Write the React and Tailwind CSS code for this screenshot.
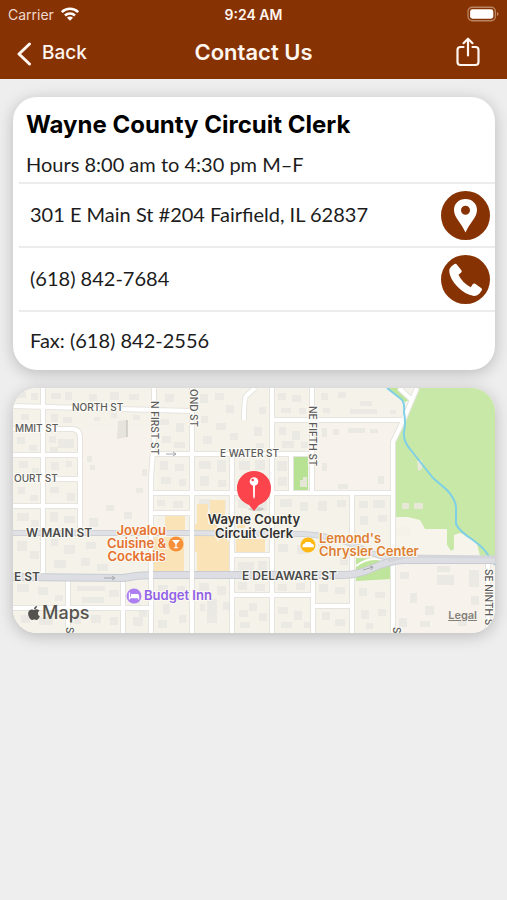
import React from 'react';
import clsx from 'clsx';
import { FaApple } from 'react-icons/fa';

const ROWS = [
  { key: 'address', text: '301 E Main St #204 Fairfield, IL 62837', label: 'Get directions', href: '#directions', Icon: PinGlyph },
  { key: 'phone',   text: '(618) 842-7684', label: 'Call the office', href: 'tel:6188427684', Icon: PhoneGlyph },
  { key: 'fax',     text: 'Fax: (618) 842-2556' },
];

/* ── Icons ───────────────────────────────────────────────────────── */
function WifiGlyph() {
  return (
    <svg viewBox="0 0 20 15" className="w-5 h-4" fill="none" stroke="currentColor" strokeWidth="2.6" aria-hidden="true">
      <path d="M1.8 5.6a11.6 11.6 0 0 1 16.4 0" />
      <path d="M5 9a7.1 7.1 0 0 1 10 0" />
      <path d="M10 14.2 7 11.2a4.2 4.2 0 0 1 6 0z" fill="currentColor" stroke="none" />
    </svg>
  );
}

function BatteryGlyph() {
  return (
    <svg viewBox="0 0 31 15" className="w-8 h-4" aria-hidden="true">
      <rect x="1" y="1" width="26.500" height="13" rx="4" fill="none" stroke="#b98460" strokeWidth="1.300" />
      <rect x="3" y="3" width="22.500" height="9" rx="2.200" fill="#fff" />
      <path d="M29 5.500q1.600.5 1.600 2t-1.600 2z" fill="#b98460" />
    </svg>
  );
}

function ShareGlyph() {
  return (
    <svg viewBox="0 0 24 30" className="w-6 h-[30px]" fill="none" stroke="currentColor" strokeWidth="2.2" strokeLinecap="round" strokeLinejoin="round" aria-hidden="true">
      <path d="M7.500 10H4.500Q1.500 10 1.500 13v12q0 3 3 3h15q3 0 3-3V13q0-3-3-3h-3" />
      <path d="M12 18.500V2M7.500 6.200 12 1.700l4.500 4.500" />
    </svg>
  );
}

function PinGlyph() {
  return (
    <svg viewBox="0 0 49 49" className="w-full h-full" aria-hidden="true">
      <path fill="#fff" fillRule="evenodd" d="M24.500 8C17.800 8 13 12.700 13 19c0 7.800 7.500 13 11.500 22.500C28.500 32 36 26.800 36 19c0-6.300-4.800-11-11.500-11zm0 6.700a4.500 4.500 0 1 1 0 9 4.500 4.500 0 0 1 0-9z" />
    </svg>
  );
}

function PhoneGlyph() {
  return (
    <svg viewBox="0 0 49 49" className="w-full h-full" aria-hidden="true">
      <path fill="#fff" d="M10.500 11.200 13.500 9q1.300-.8 2.300.4l4.600 5.800q.9 1.200-.2 2.200l-2.700 2.400q1.600 3.800 5 7.200 3.500 3.400 7.200 5.200l2.200-3.100q1-1.200 2.300-.3l6.200 4.500q1.200 1 .3 2.300l-2.200 3q-2.300 2.800-6.600 2.200-8.600-1.700-15.600-9.200Q9 24 8.300 16.800q-.3-3.600 2.200-5.600z" />
    </svg>
  );
}

/* ── Map geometry ────────────────────────────────────────────────── */
const STREETS = [
  'M0 18L178 23',
  'M30 0V189',
  'M0 41H59Q67 41 67 50V145',
  'M0 67H67', 'M0 91H67', 'M0 118H67',
  'M141 0V50L138 90V245',
  'M141 66H299', 'M138 105H380', 'M138 125H179',
  'M179 0V245', 'M219 66V245', 'M259 0V245',
  'M299 0V105', 'M300 189V245', 'M278 66V105', 'M339 105V245',
  'M259 32H390',
  'M404 0L390 33L380 54V245', 'M386 0L399 12',
  'M55 189V245', 'M110 189V245', 'M0 220H138',
  'M219 167H259', 'M219 207H300', 'M300 218H339',
  'M475 172V245', 'M242 0L233 8Q231 11 231 32',
];

// x, y, width, height
const BUILDINGS = [
  [5,4,8,6],[18,5,7,7],[38,5,10,6],[52,4,7,8],[76,6,8,7],[97,4,9,8],[116,6,10,6],[152,6,9,8],
  [8,26,8,6],[38,26,7,8],[50,29,9,6],[81,29,6,4],[98,25,6,5],[120,27,7,5],
  [4,49,8,7],[16,57,8,6],[36,48,7,7],[45,51,16,9],[37,59,8,5],[74,68,5,6],[77,77,5,5],
  [6,73,9,7],[19,80,7,6],[38,74,8,8],[53,73,6,6],[5,99,7,7],[17,107,8,6],[37,99,9,6],[54,105,8,8],
  [4,125,12,8],[18,132,8,7],[37,124,8,10],[51,128,11,7],[76,130,9,9],[93,117,8,6],[111,124,8,7],
  [123,100,7,5],[129,81,5,7],[147,31,9,6],[163,35,8,9],[149,48,9,7],[161,54,11,6],
  [147,73,8,9],[162,76,9,7],[148,89,10,7],[166,91,7,7],[144,112,8,6],[160,113,10,7],
  [187,6,8,9],[202,5,9,7],[213,17,8,8],[188,28,7,7],[203,35,10,7],[217,45,8,7],[190,48,9,8],[241,39,8,9],[243,55,8,5],[246,19,7,7],
  [186,73,12,8],[204,72,9,12],[187,88,9,10],[205,92,8,7],[226,73,11,9],[242,72,10,10],[226,91,9,9],[246,91,8,8],
  [265,5,8,7],[279,7,9,7],[268,20,10,5],[286,20,7,6],[266,39,7,8],[279,43,8,9],[269,53,12,7],[288,54,7,6],[264,73,10,10],[265,89,9,9],
  [308,5,7,7],[325,4,8,6],[347,13,12,5],[310,20,7,5],[337,21,27,5],[377,22,6,4],
  [309,40,5,9],[320,41,6,6],[335,40,17,5],[357,41,8,4],[365,88,6,8],[325,96,10,5],[309,75,5,8],
  [186,111,12,10],[204,112,9,10],[225,111,10,9],[245,113,9,10],[267,111,12,8],[287,114,8,9],[305,113,9,10],[324,112,9,7],[346,113,9,7],[360,112,12,8],[347,128,8,9],[365,127,9,7],
  [4,153,10,10],[17,163,9,8],[38,151,7,7],[51,157,11,9],[73,154,10,7],[41,172,12,8],[68,170,9,8],[84,176,11,7],
  [4,196,12,8],[25,199,10,8],[42,207,8,6],[64,198,28,5],[69,209,22,6],[96,202,10,7],[118,209,9,7],[126,219,8,10],
  [8,227,9,8],[26,229,14,8],[61,226,7,10],[78,227,10,8],[97,229,8,8],[120,229,10,9],
  [145,197,10,9],[164,198,8,10],[150,216,7,10],[166,227,7,8],[145,232,9,8],
  [186,195,10,8],[204,198,9,9],[187,216,5,7],[194,211,10,24],[210,214,6,8],
  [225,174,16,8],[245,173,9,9],[225,194,9,8],[242,196,10,7],[226,222,9,7],[236,215,8,8],[246,225,8,8],[227,234,10,6],
  [265,156,10,8],[284,157,10,9],[265,196,9,7],[283,195,9,7],[265,219,10,7],[281,223,8,9],[268,234,11,6],[291,234,6,6],
  [306,196,9,8],[322,199,10,7],[309,224,8,8],[322,231,10,7],[305,156,12,8],[327,169,8,8],
  [346,200,8,8],[362,204,10,6],[348,222,8,9],[365,221,8,7],[353,235,7,6],
  [387,184,9,7],[397,205,7,10],[412,218,9,9],[424,187,17,10],[424,178,13,6],[456,182,10,17],[458,208,8,9],[386,230,8,9],[407,233,10,6],[445,232,9,6],
];

const SHOPS = [
  'M152 128h20v14h-20z', 'M141 149h30v34h-30z',
  'M184 116h11v20h-11z', 'M197 112h15v20h-15z', 'M182 136h22v28h-22z',
  'M184 153h32v31h-32z', 'M206 142h8v20h-8z', 'M223 151h29v13h-29z', 'M224 128h8v12h-8z',
];

function PoiText({ x, y, fill, anchor = 'start', lines, lead = 13 }) {
  return (
    <text
      x={x}
      y={y}
      fill={fill}
      fontSize="13"
      fontWeight="600"
      textAnchor={anchor}
      stroke="#fbf8f0"
      strokeWidth="2"
      paintOrder="stroke"
    >
      {lines.map((line, i) => <tspan key={line} x={x} dy={i === 0 ? 0 : lead}>{line}</tspan>)}
    </text>
  );
}

function StreetMap() {
  return (
    <svg
      viewBox="0 0 482 245"
      className="block w-full font-[Inter,sans-serif]"
      role="img"
      aria-label="Map of the streets around Wayne County Circuit Clerk"
    >
      <rect width="482" height="245" fill="#f7f4ec" />
      <path d="M0 0H139V189H0zM144 0H377L399 0 380 50V245H0V189H144z" fill="#f5f3e9" />
      <path d="M68 42H138V145H68zM301 34H378V103H301zM382 172H482V245H382z" fill="#f7f2eb" />
      <g fill="#ebe9e3">
        {BUILDINGS.map(([x, y, w, h]) => <rect key={`${x}-${y}`} x={x} y={y} width={w} height={h} />)}
      </g>
      <path d="M105 33l9-1v17l-10 2z" fill="#e6e4dd" />
      <path d="M114 32v17" stroke="#b9b8b4" />

      {/* Parks and the river */}
      <path d="M404 0H482V168H467L464 156 456 149 447 145 441 147V161L438 163 434 157V141H412L407 132 395 129H381V54L391 33z" fill="#c8e8a7" />
      <path d="M374 0L392 14 396 12 386 0zM343 170L379 171V191L343 193z" fill="#bfe59c" />
      <path d="M280 69h15v34h-15z" fill="#b7e294" />
      <path d="M287 92h3v-3h4v10h-7z" fill="#e5e6d6" />
      <path d="M404 73l5-1v9l-4 2zM389 115h7v6h-7zM401 115h9v6h-9z" fill="#e8e8d8" />
      <path d="M381 141q8-4 16-1l2 8h-18z" fill="#f5f3e9" />
      <g fill="#fbe3b8">
        {SHOPS.map(d => <path key={d} d={d} />)}
      </g>

      {/* Streets: a grey casing under a white line */}
      <g fill="none" strokeLinejoin="round">
        <path d={STREETS.join('')} stroke="#e6e4df" strokeWidth="6" />
        <path d={STREETS.join('')} stroke="#fff" strokeWidth="4" />
        <path d="M374 0L388 11Q392 14 391 24 393 34 391 44 390 53 397 61L420 90 434 102Q444 113 443 122V136Q446 143 460 152 472 161 475 167L482 177" stroke="#7fd0e6" strokeWidth="2" />
        <path d="M343 178Q360 165 378 176" stroke="#fff" strokeWidth="2" />
        <path d="M0 145H178L290 146Q320 147 345 159T384 171" stroke="#cfd1d6" strokeWidth="6" />
        <path d="M0 145H178L290 146Q320 147 345 159T384 171" stroke="#e0e1e5" strokeWidth="4" />
        <path d="M0 189L110 190Q125 187 140 187H330Q345 187 360 180T390 172L482 172" stroke="#c9ccd2" strokeWidth="8" />
        <path d="M0 189L110 190Q125 187 140 187H330Q345 187 360 180T390 172L482 172" stroke="#dcdee3" strokeWidth="6" />
        <path d="M375 173L395 168 482 169" stroke="#d3d5da" strokeWidth="3" />
        <path d="M138 183V245M179 180V245M138 140V153M179 140V153M259 140V153" stroke="#fff" strokeWidth="4" />
        <path d="M91 190h11m-3-2 3 2-3 2M153 66h10m-3-2 3 2-3 2M350 182l10-3m-3-1 3 1-2 3" stroke="#a3a6ab" />
      </g>

      {/* Street names */}
      <g fill="#5b5b5b" fontSize="10" fontWeight="500" stroke="#fbfaf5" strokeWidth="2" paintOrder="stroke">
        <text x="59" y="23">NORTH ST</text>
        <text x="2" y="44">MMIT ST</text>
        <text x="1" y="94">OURT ST</text>
        <text x="207" y="69">E WATER ST</text>
        <text transform="translate(138 13) rotate(90)">N FIRST ST</text>
        <text transform="translate(177 1) rotate(90)">OND ST</text>
        <text transform="translate(296 18) rotate(90)">NE FIFTH ST</text>
        <text transform="translate(472 181) rotate(90)">SE NINTH S</text>
        <text transform="translate(53 239) rotate(90)">S</text>
        <text transform="translate(380 239) rotate(90)">S</text>
      </g>
      <g fill="#4a4a4a" fontSize="12" fontWeight="600" stroke="#fbfaf5" strokeWidth="2" paintOrder="stroke">
        <text x="13" y="149">W MAIN ST</text>
        <text x="1" y="193">E ST</text>
        <text x="229" y="192">E DELAWARE ST</text>
      </g>

      {/* Places */}
      <PoiText x="153" y="147" fill="#e5702e" anchor="end" lines={['Jovalou', 'Cuisine &', 'Cocktails']} />
      <circle cx="163" cy="156" r="7.500" fill="#f6913a" />
      <path d="M159 152h8l-3.400 4v3.200h1.600v1h-4.400v-1h1.600V156z" fill="#fff" />
      <PoiText x="306" y="155" fill="#dd7f33" lines={["Lemond's", 'Chrysler Center']} />
      <circle cx="295" cy="157" r="7.500" fill="#fdb813" />
      <path d="M289.500 157.500q0-1.500 2-1.700l1.300-1.800h4.400l1.600 1.800q2 .2 2 1.700v1.700h-11.300z" fill="#fff" />
      <PoiText x="131" y="212" fill="#8f60e8" lines={['Budget Inn']} />
      <circle cx="121" cy="208" r="7.500" fill="#ad7ff2" />
      <path d="M116.500 204.500v7m0-2h9m0 2v-4" fill="none" stroke="#fff" strokeWidth="1.300" />
      <path d="M118 206h7.500v3H118z" fill="#fff" />

      <ellipse cx="243" cy="121" rx="8" ry="2" fill="#000" opacity=".12" />
      <path d="M241 83a17 17 0 0 1 17 17c0 9-5 14-12 17l-5 6-5-6c-7-3-12-8-12-17a17 17 0 0 1 17-17z" fill="#fb444c" />
      <circle cx="241" cy="93.500" r="4.300" fill="#fff" />
      <circle cx="239.700" cy="92" r="1.300" fill="#fb444c" />
      <path d="M240 97h2l-.2 12-.8 2-.8-2z" fill="#fff" />
      <PoiText x="241" y="136" fill="#303030" anchor="middle" lead={14} lines={['Wayne County', 'Circuit Clerk']} />
    </svg>
  );
}

function ContactRow({ text, label, href, Icon }) {
  return (
    <li className="ml-1.5 flex h-16 items-center justify-between border-t-2 border-[#ececec] pl-[11px] pr-[5px] last:h-[60px]">
      <span className="pb-0.5">{text}</span>
      {Icon && (
        <a href={href} aria-label={label} className="block size-[49px] shrink-0 rounded-full bg-[#873202]">
          <Icon />
        </a>
      )}
    </li>
  );
}

export default function App() {
  const card = 'overflow-hidden rounded-[24px] shadow-[0_3px_16px_rgba(0,0,0,0.22)]';

  return (
    <div className="min-h-screen bg-[#eeeeee] font-[Inter,sans-serif]">
      <header className="bg-[#873202] text-[#fff6ef]">
        {/* Status bar */}
        <div className="grid h-7 grid-cols-3 items-center px-2 text-[14px]">
          <div className="flex items-center gap-1.5 text-[#f0d9cb]">
            Carrier <span className="text-white"><WifiGlyph /></span>
          </div>
          <div className="text-center font-semibold">9:24 AM</div>
          <div className="flex justify-end"><BatteryGlyph /></div>
        </div>

        <nav className="grid h-[51px] grid-cols-3 items-center px-4 pb-1">
          <button type="button" className="flex items-center gap-2.5 pt-1 text-left text-[19px] font-medium">
            <svg viewBox="0 0 16 24" className="h-6 w-4" fill="none" stroke="currentColor" strokeWidth="3" strokeLinecap="round" strokeLinejoin="round" aria-hidden="true">
              <path d="M13.500 2 3 12l10.500 10" />
            </svg>
            Back
          </button>
          <h1 className="whitespace-nowrap pt-0.5 text-center text-[22px] font-semibold">Contact Us</h1>
          <button type="button" aria-label="Share" className="mr-[11px] justify-self-end">
            <ShareGlyph />
          </button>
        </nav>
      </header>

      <main className="flex flex-col gap-[18px] pl-[13px] pr-3 pt-[18px]">
        <section className={clsx(card, 'bg-white font-[Lato,sans-serif] text-[20px] text-[#1c1c1c]')}>
          <div className="px-[13px] pb-0.5 pt-3">
            <h2 className="font-[Inter,sans-serif] text-[24px] font-bold leading-8 text-black">
              Wayne County Circuit Clerk
            </h2>
            <p className="pt-2 leading-[31px]">Hours 8:00 am to 4:30 pm M–F</p>
          </div>
          <ul>
            {ROWS.map(({ key, ...row }) => <ContactRow key={key} {...row} />)}
          </ul>
        </section>

        <section className={clsx(card, 'relative')}>
          <StreetMap />
          <div className="absolute bottom-2 left-[13px] flex items-center text-[18px] font-medium leading-6 text-[#55534f]">
            <FaApple className="size-4" aria-hidden="true" />Maps
          </div>
          <a href="#legal" className="absolute bottom-2.5 right-[18px] text-[11px] font-semibold leading-4 text-[#85827b] underline">
            Legal
          </a>
        </section>
      </main>
    </div>
  );
}
